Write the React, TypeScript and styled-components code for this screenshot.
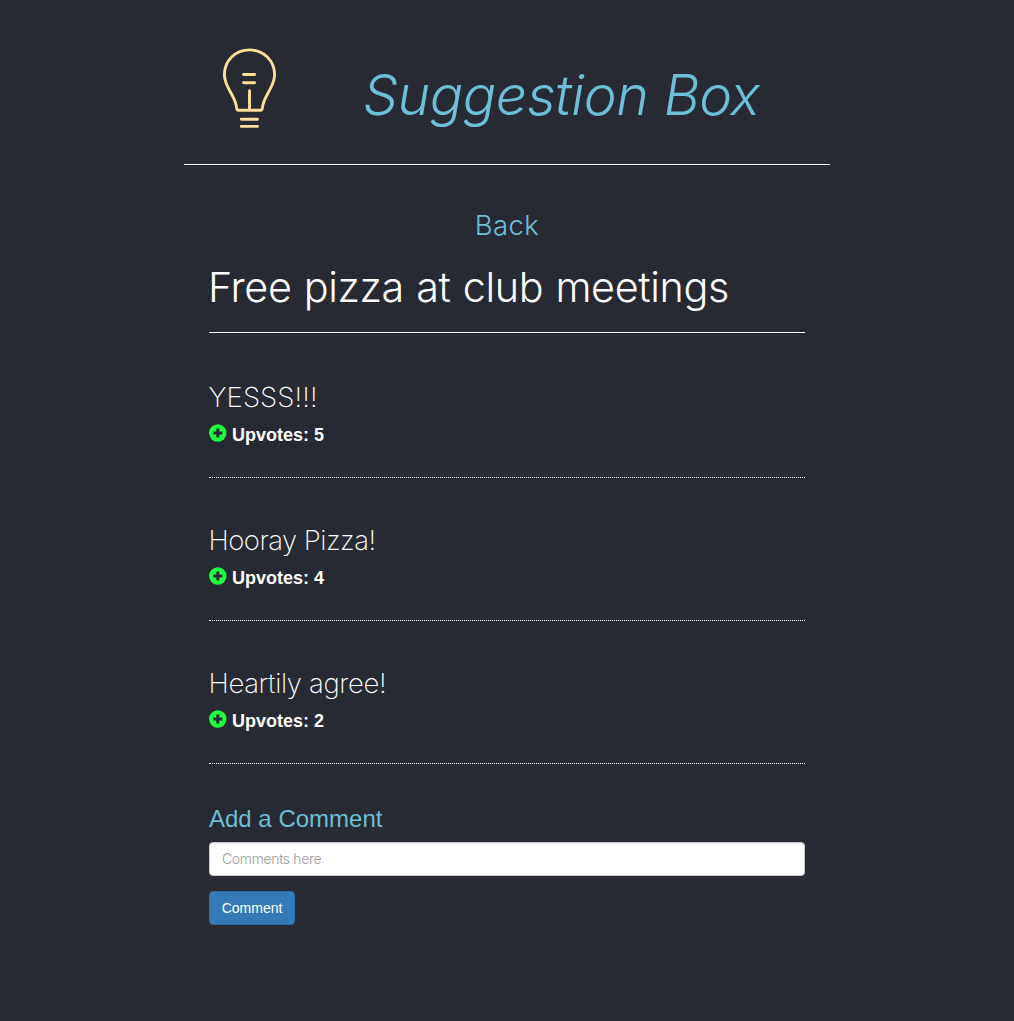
import React, { useState } from "react";
import styled, { createGlobalStyle } from "styled-components";

const light = `Inter, "Liberation Sans", Arial, sans-serif`;
const regular = `"Liberation Sans", Arial, sans-serif`;
const aqua = "#6cbfd6";

const GlobalStyle = createGlobalStyle`
  *, *::before, *::after { box-sizing: border-box; }
  body { margin: 0; background: #282a33; color: #fff; font-family: ${regular}; }
`;

const Page = styled.div`
  width: 646px;
  min-height: 1021px;
  margin: 0 auto;
`;

const Header = styled.header`
  display: flex;
  height: 165px;
  border-bottom: 1px solid #fff;
`;

const Bulb = styled.svg`
  width: 60px;
  height: 90px;
  margin: 43px 0 0 35px;
  flex: none;
`;

const Title = styled.h1`
  margin: 63px 0 0 84px;
  font: italic 300 55.5px/64px ${light};
  letter-spacing: -0.44px;
  color: ${aqua};
  white-space: nowrap;
`;

const Content = styled.main`
  padding: 44px 25px 0;
`;

const Back = styled.a`
  display: block;
  text-align: center;
  color: ${aqua};
  font: 300 27.5px/32px ${light};
  letter-spacing: 0.4px;
  text-decoration: none;
`;

const Topic = styled.h2`
  height: 92px;
  margin: 0 0 0 -1px;
  padding: 20px 0 0;
  font: 300 41.3px/52px ${light};
  letter-spacing: -0.36px;
  word-spacing: 1px;
  white-space: nowrap;
`;

const List = styled.section`
  margin-top: -1px;
  padding-top: 2px;
  border-top: 1px solid #fff;
`;

const Item = styled.article`
  height: 143px;
  padding-top: 44px;
  border-bottom: 1px dotted #fff;
`;

const ItemText = styled.h3<{ $track: number }>`
  margin: 0 0 0 -0.5px;
  font: 200 27.5px/36px ${light};
  letter-spacing: ${(p) => p.$track}px;
  white-space: nowrap;
`;

const Votes = styled.div`
  display: flex;
  height: 20px;
  margin-top: 9px;
  gap: 5px;
  font: bold 18px/22px ${regular};
`;

const UpButton = styled.button`
  width: 18px;
  height: 18px;
  padding: 0;
  border: 0;
  background: none;
  cursor: pointer;
`;

const Icon = styled.svg`
  display: block;
  width: 18px;
  height: 18px;
`;

const Form = styled.form`
  display: flex;
  flex-direction: column;
  align-items: flex-start;
  padding-top: 41px;
`;

const Label = styled.label`
  font: 24px/28px ${regular};
  color: ${aqua};
`;

const Field = styled.input`
  width: 100%;
  height: 34px;
  margin-top: 9px;
  padding: 5px 12px 7px;
  border: 1px solid #ccc;
  border-radius: 4px;
  box-shadow: inset 0 1px 1px rgba(0, 0, 0, 0.075);
  font: 300 14px/20px ${light};
  letter-spacing: -0.35px;
  &::placeholder { color: #999; opacity: 1; }
`;

const Submit = styled.button`
  width: 86px;
  height: 34px;
  margin-top: 15px;
  padding: 0;
  border: 1px solid #2e6da4;
  border-radius: 4px;
  background: #337ab7;
  color: #fff;
  font: 14px/20px ${regular};
`;

const comments = [
  { text: "YESSS!!!", votes: 5, track: 0.1 },
  { text: "Hooray Pizza!", votes: 4, track: -0.53 },
  { text: "Heartily agree!", votes: 2, track: -0.35 },
];

export default function App() {
  const [votes, setVotes] = useState(comments.map((c) => c.votes));
  const upvote = (i: number) => setVotes(votes.map((v, j) => (j === i ? v + 1 : v)));
  return (
    <>
      <GlobalStyle />
      <Page>
        <Header>
          <Bulb viewBox="0 0 60 90" fill="none" stroke="#fbdf9b" strokeWidth="2.9" strokeLinecap="round" strokeLinejoin="round">
            <path d="M19.5 67.2Q18 67.2 17.7 65.5C17 56.5 12.8 52.5 8.6 43.5C6.5 39 5.4 35.5 5.4 31.5C5.4 17.5 16.5 6.9 30.5 6.9S55.6 17.5 55.6 31.5C55.6 35.5 54.5 39 52.4 43.5C48.2 52.5 44 56.5 43.3 65.5Q43 67.2 41.5 67.2Z" />
            <path d="M24.6 31.5H35.6M24.6 39.8H35.6M30.5 47.8V66M22.3 76.2H38.5M22.3 83.4H38.5" />
          </Bulb>
          <Title>Suggestion Box</Title>
        </Header>
        <Content>
          <Back href="#">Back</Back>
          <Topic>Free pizza at club meetings</Topic>
          <List>
            {comments.map((c, i) => (
              <Item key={c.text}>
                <ItemText $track={c.track}>{c.text}</ItemText>
                <Votes>
                  <UpButton aria-label="Upvote" onClick={() => upvote(i)}>
                    <Icon viewBox="0 0 18 18">
                      <circle cx="8.8" cy="9" r="8.7" fill="#1fff3d" />
                      <path d="M7.3 4.5h3v3h3v3h-3v3h-3v-3h-3v-3h3z" fill="#282a33" />
                    </Icon>
                  </UpButton>
                  <span>Upvotes: {votes[i]}</span>
                </Votes>
              </Item>
            ))}
          </List>
          <Form onSubmit={(e) => e.preventDefault()}>
            <Label htmlFor="comment">Add a Comment</Label>
            <Field id="comment" placeholder="Comments here" />
            <Submit>Comment</Submit>
          </Form>
        </Content>
      </Page>
    </>
  );
}
